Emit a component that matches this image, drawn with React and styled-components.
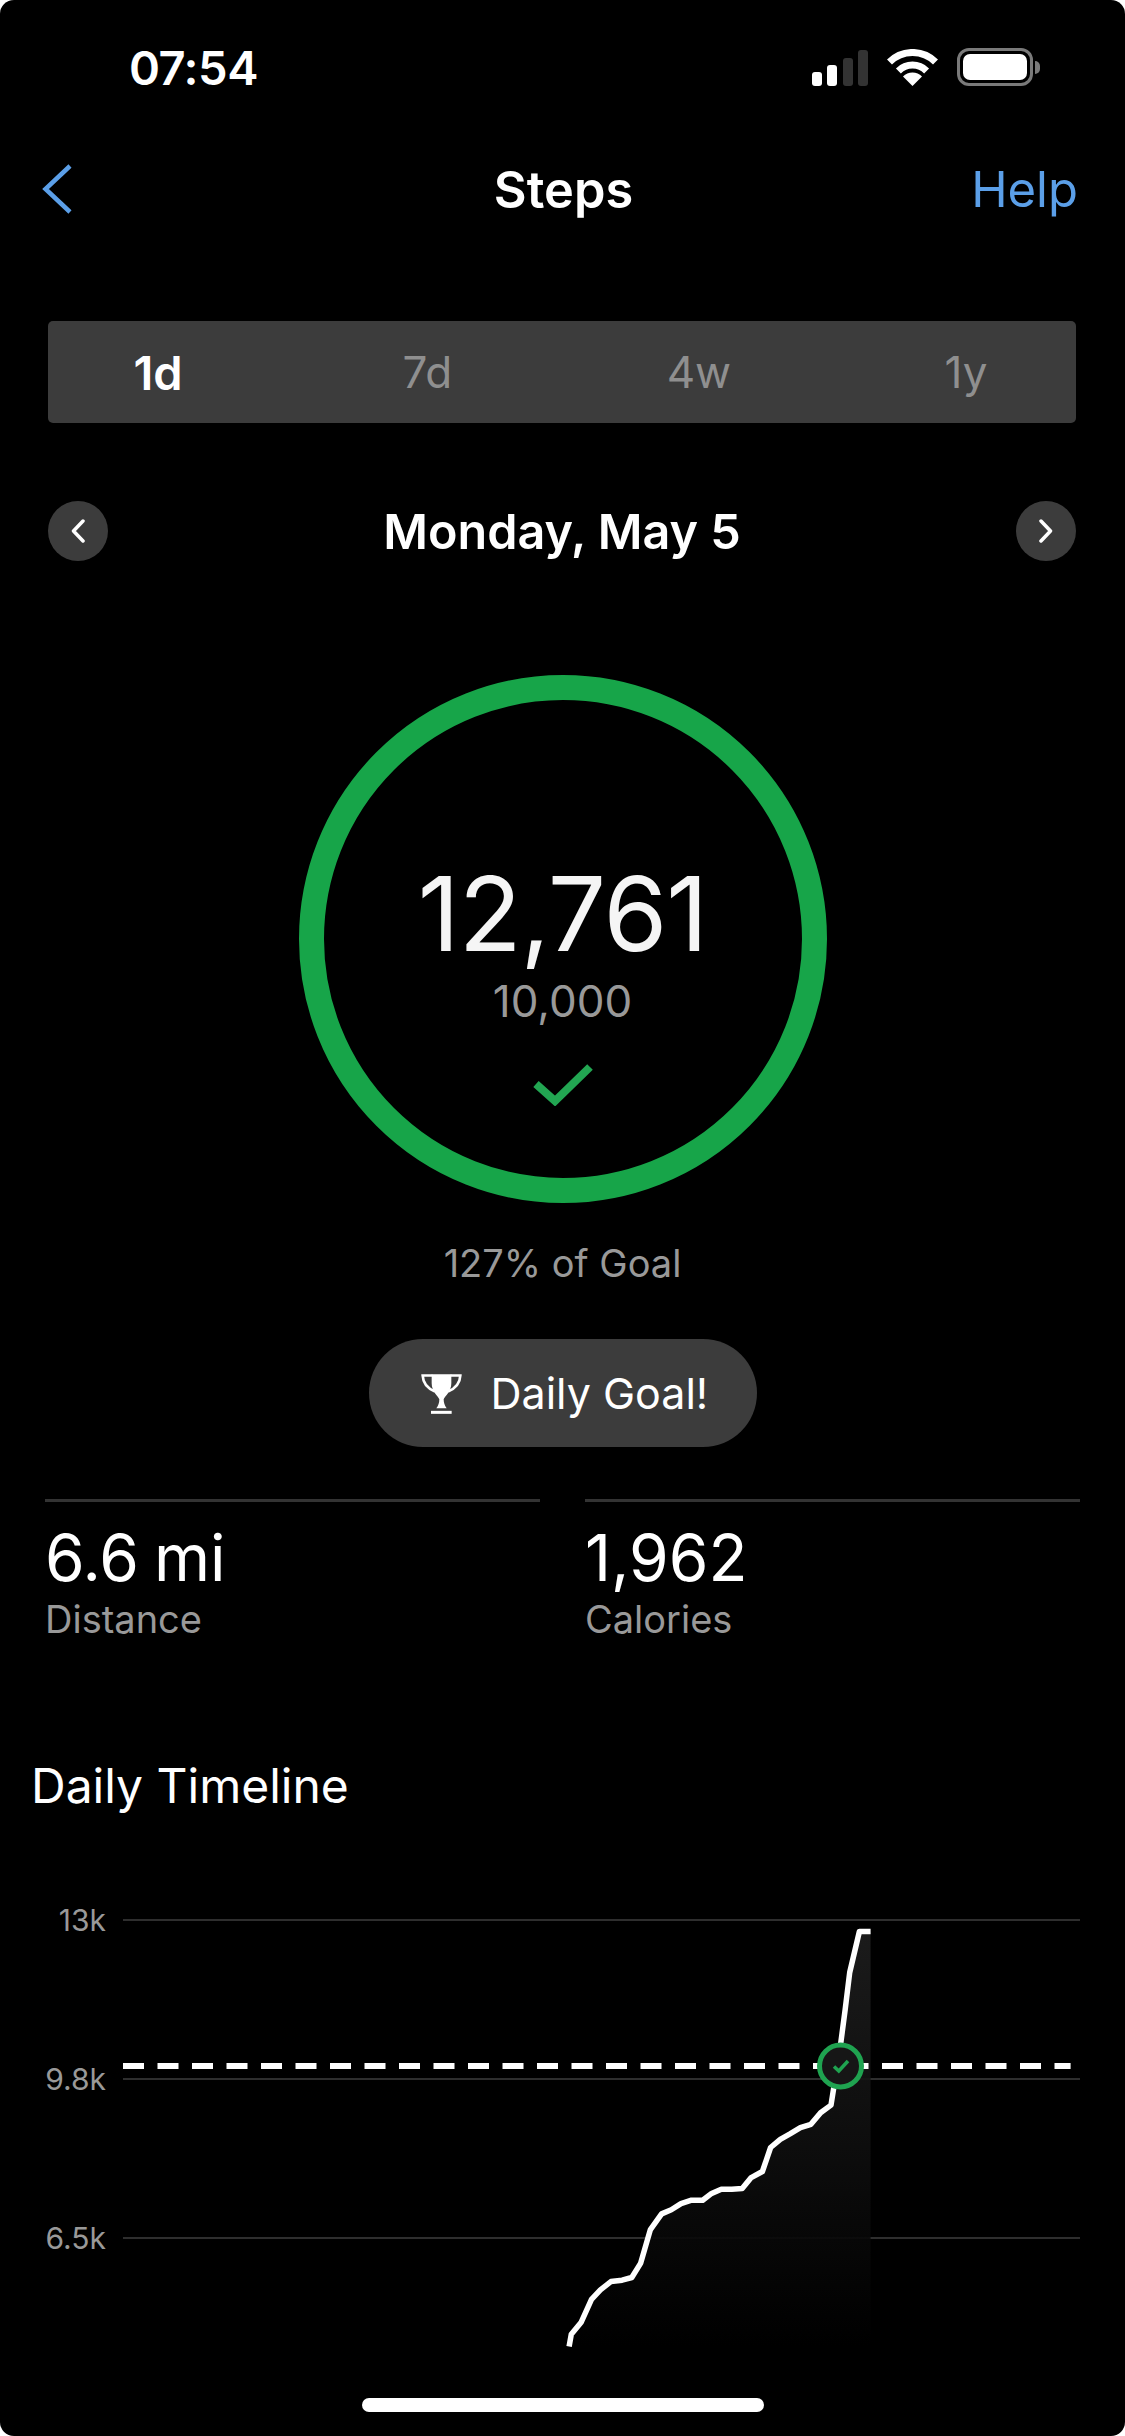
import React from "react";
import styled, { createGlobalStyle } from "styled-components";

const GlobalStyle = createGlobalStyle`
  html, body {
    margin: 0;
    padding: 0;
    background: #fff;
  }
  * { box-sizing: border-box; }
`;

const Screen = styled.div`
  position: relative;
  width: 1125px;
  height: 2436px;
  overflow: hidden;
  border-radius: 14px;
  background: #000;
  color: #fff;
  font-family: Inter, "Liberation Sans", sans-serif;
`;

const StatusBar = styled.div`
  display: flex;
  align-items: center;
  justify-content: space-between;
  height: 134px;
  padding: 0 85px 0 129px;
`;

const Time = styled.span`
  font-size: 47px;
  font-weight: 600;
  letter-spacing: -0.5px;
`;

const StatusIcons = styled.div`
  display: flex;
  align-items: flex-end;
  gap: 19px;
`;

const Signal = styled.div`
  display: flex;
  align-items: flex-end;
  gap: 5.5px;
  height: 36px;
`;

const SignalBar = styled.span`
  width: 10px;
  height: ${props => props.h}px;
  border-radius: 3px;
  background: ${props => (props.on ? "#fff" : "#333")};
`;

const Battery = styled.div`
  display: flex;
  align-items: center;
  gap: 2px;
`;

const BatteryBody = styled.div`
  width: 76px;
  height: 38px;
  padding: 3px;
  border: 3px solid #7a7a7a;
  border-radius: 12px;
`;

const BatteryFill = styled.div`
  width: 100%;
  height: 100%;
  border-radius: 7px;
  background: #fff;
`;

const BatteryCap = styled.span`
  width: 5px;
  height: 13px;
  border-radius: 0 6px 6px 0;
  background: #7a7a7a;
`;

const Nav = styled.div`
  display: grid;
  grid-template-columns: 1fr auto 1fr;
  align-items: center;
  height: 110px;
  padding: 0 47px 0 49px;
`;

const BackIcon = styled.svg`
  margin-left: -7px;
`;

const Title = styled.div`
  font-size: 50.5px;
  font-weight: 600;
`;

const Help = styled.div`
  justify-self: end;
  font-size: 49px;
  color: #5b9fe8;
`;

const Segments = styled.div`
  display: flex;
  align-items: center;
  justify-content: space-between;
  height: 102px;
  margin: 77px 49px 0 48px;
  padding: 0 80px;
  border-radius: 5px;
  background: #3c3c3c;
`;

const Segment = styled.span`
  width: 60px;
  text-align: center;
  font-size: ${props => (props.active ? 47 : 44)}px;
  font-weight: ${props => (props.active ? 600 : 400)};
  color: ${props => (props.active ? "#fff" : "#8f8f8f")};
`;

const DateRow = styled.div`
  display: flex;
  align-items: center;
  justify-content: space-between;
  height: 60px;
  margin: 78px 49px 0 48px;
`;

const RoundButton = styled.div`
  display: flex;
  align-items: center;
  justify-content: center;
  width: 60px;
  height: 60px;
  border-radius: 50%;
  background: #3c3c3c;
`;

const DateLabel = styled.div`
  font-size: 48.5px;
  font-weight: 600;
`;

const Ring = styled.div`
  display: flex;
  flex-direction: column;
  align-items: center;
  width: 528px;
  height: 528px;
  margin: 114px auto 0;
  padding-top: 155px;
  border: 25px solid #17a549;
  border-radius: 50%;
`;

const StepCount = styled.div`
  font-size: 103px;
  line-height: 118px;
  letter-spacing: -1px;
  color: #f5f5f5;
`;

const StepGoal = styled.div`
  margin-top: 0;
  font-size: 44px;
  line-height: 56px;
  color: #999;
`;

const GoalCheck = styled.svg`
  width: 60px;
  height: 43px;
  margin-top: 34px;
`;

const GoalPercent = styled.div`
  margin-top: 37px;
  font-size: 38px;
  line-height: 46px;
  text-align: center;
  color: #999;
`;

const Pill = styled.div`
  display: flex;
  align-items: center;
  gap: 29px;
  width: 388px;
  height: 108px;
  margin: 53px auto 0;
  padding-left: 52px;
  border-radius: 54px;
  background: #3c3c3c;
  font-size: 43px;
`;

const Stats = styled.div`
  display: grid;
  grid-template-columns: 495px 495px;
  gap: 45px;
  margin: 52px 0 0 45px;
`;

const Stat = styled.div`
  padding-top: 24px;
  border-top: 3px solid #333;
`;

const StatValue = styled.div`
  font-size: 64px;
  line-height: 64px;
  word-spacing: -3px;
`;

const StatLabel = styled.div`
  margin-top: 6px;
  font-size: 38px;
  line-height: 46px;
  color: #999;
`;

const SectionTitle = styled.div`
  margin: 115px 0 0 31px;
  font-size: 48px;
  line-height: 58px;
`;

const Chart = styled.div`
  position: relative;
  margin-top: 25px;
`;

const GridRow = styled.div`
  display: flex;
  align-items: center;
  height: 159px;
  padding-right: 45px;
`;

const AxisLabel = styled.span`
  flex: 0 0 106px;
  margin-right: 17px;
  font-size: 30px;
  text-align: right;
  color: #999;
`;

const GridLine = styled.div`
  flex: 1;
  height: 2px;
  background: #2e2e2e;
`;

const ChartOverlay = styled.svg`
  position: absolute;
  top: 0;
  left: 0;
`;

const HomeIndicator = styled.div`
  position: absolute;
  bottom: 24px;
  left: 362px;
  width: 402px;
  height: 14px;
  border-radius: 7px;
  background: #fff;
`;

const Wifi = () => (
  <svg width="51" height="37" viewBox="0 0 51 37" fill="none">
    <path d="M2.5 13A32.5 32.5 0 0 1 48.5 13" stroke="#fff" strokeWidth="7" />
    <path d="M11.4 21.9A20 20 0 0 1 39.6 21.9" stroke="#fff" strokeWidth="7" />
    <path d="M25.5 37L16 27.5A13.4 13.4 0 0 1 35 27.5Z" fill="#fff" />
  </svg>
);

const Chevron = ({ dir }) => (
  <svg width="16" height="24" viewBox="0 0 16 24" fill="none">
    <path
      d={dir === "left" ? "M13 2L3.5 12L13 22" : "M3 2L12.5 12L3 22"}
      stroke="#fff"
      strokeWidth="3.5"
      strokeLinecap="round"
      strokeLinejoin="round"
    />
  </svg>
);

const Trophy = () => (
  <svg width="41" height="41" viewBox="0 0 123 122" fill="none">
    <path d="M34 7H5C6 30 20 46 42 55" stroke="#fff" strokeWidth="8" />
    <path d="M89 7H118C117 30 103 46 81 55" stroke="#fff" strokeWidth="8" />
    <path
      d="M32 3H91V30C91 55 72 68 68 78C68 88 71 97 77 105H46C52 97 55 88 55 78C51 68 32 55 32 30Z"
      fill="#fff"
    />
    <rect x="30" y="113" width="62" height="9" fill="#fff" />
  </svg>
);

// traced from the day's step curve, page coordinates
const curve = [
  [569.1, 2346.5], [571.3, 2334.2], [581, 2322.6], [591.5, 2299.3], [600.4, 2289.8],
  [610.9, 2281.6], [622.1, 2280.2], [631.8, 2277.5], [640.7, 2263.1], [650.4, 2229.6],
  [661.6, 2213.9], [671.3, 2209.8], [681, 2203.6], [691.5, 2200.2], [702.7, 2200.2],
  [711.6, 2193.4], [721.3, 2189.2], [731.8, 2189.2], [742.2, 2188.6], [751.2, 2177.6],
  [762.4, 2171.5], [770.6, 2147.5], [780.3, 2139.3], [790, 2133.9], [800.4, 2127.7],
  [810.9, 2124.3], [820.6, 2112.7], [831, 2105.1], [834, 2086.3], [840.7, 2043.6],
  [845.2, 2009.4], [849.7, 1972.5], [859.4, 1931.5], [870.6, 1931.5],
];

const linePoints = curve.map(p => p.join(",")).join(" ");
const areaPoints = `${linePoints} 870.6,2346.5 569.1,2346.5`;

const tabs = ["1d", "7d", "4w", "1y"];
const axis = ["13k", "9.8k", "6.5k"];

export default function App() {
  return (
    <Screen>
      <GlobalStyle />
      <StatusBar>
        <Time>07:54</Time>
        <StatusIcons>
          <Signal>
            <SignalBar h={14} on />
            <SignalBar h={21} on />
            <SignalBar h={28} />
            <SignalBar h={36} />
          </Signal>
          <Wifi />
          <Battery>
            <BatteryBody>
              <BatteryFill />
            </BatteryBody>
            <BatteryCap />
          </Battery>
        </StatusIcons>
      </StatusBar>

      <Nav>
        <BackIcon width="30" height="50" viewBox="0 0 30 50" fill="none">
          <path d="M28 2L3.5 25L28 48" stroke="#5b9fe8" strokeWidth="4.5" />
        </BackIcon>
        <Title>Steps</Title>
        <Help>Help</Help>
      </Nav>

      <Segments>
        {tabs.map((t, i) => (
          <Segment key={t} active={i === 0}>{t}</Segment>
        ))}
      </Segments>

      <DateRow>
        <RoundButton><Chevron dir="left" /></RoundButton>
        <DateLabel>Monday, May 5</DateLabel>
        <RoundButton><Chevron dir="right" /></RoundButton>
      </DateRow>

      <Ring>
        <StepCount>12,761</StepCount>
        <StepGoal>10,000</StepGoal>
        <GoalCheck viewBox="0 0 60 43" fill="none">
          <path d="M3 21L22 38L57 4" stroke="#22a652" strokeWidth="8" />
        </GoalCheck>
      </Ring>
      <GoalPercent>127% of Goal</GoalPercent>

      <Pill>
        <Trophy />
        Daily Goal!
      </Pill>

      <Stats>
        <Stat>
          <StatValue>6.6 mi</StatValue>
          <StatLabel>Distance</StatLabel>
        </Stat>
        <Stat>
          <StatValue>1,962</StatValue>
          <StatLabel>Calories</StatLabel>
        </Stat>
      </Stats>

      <SectionTitle>Daily Timeline</SectionTitle>

      <Chart>
        {axis.map(a => (
          <GridRow key={a}>
            <AxisLabel>{a}</AxisLabel>
            <GridLine />
          </GridRow>
        ))}
        <ChartOverlay width="1125" height="520" viewBox="0 1840 1125 520" fill="none">
          <defs>
            <linearGradient id="area" x1="0" y1="0" x2="0" y2="1">
              <stop offset="0" stopColor="#1e1e1e" />
              <stop offset="1" stopColor="#000" />
            </linearGradient>
          </defs>
          <polygon points={areaPoints} fill="url(#area)" opacity="0.9" />
          <line x1="123" y1="2066" x2="1070.6" y2="2066" stroke="#fff" strokeWidth="6" strokeDasharray="21 13.5" />
          <polyline points={linePoints} stroke="#fff" strokeWidth="5.5" strokeLinejoin="round" />
          <circle cx="840.5" cy="2066" r="21" fill="#161616" stroke="#1fa350" strokeWidth="5" />
          <path d="M834 2066.5L838.8 2071L848 2061" stroke="#1fa350" strokeWidth="3.5" />
        </ChartOverlay>
      </Chart>

      <HomeIndicator />
    </Screen>
  );
}
